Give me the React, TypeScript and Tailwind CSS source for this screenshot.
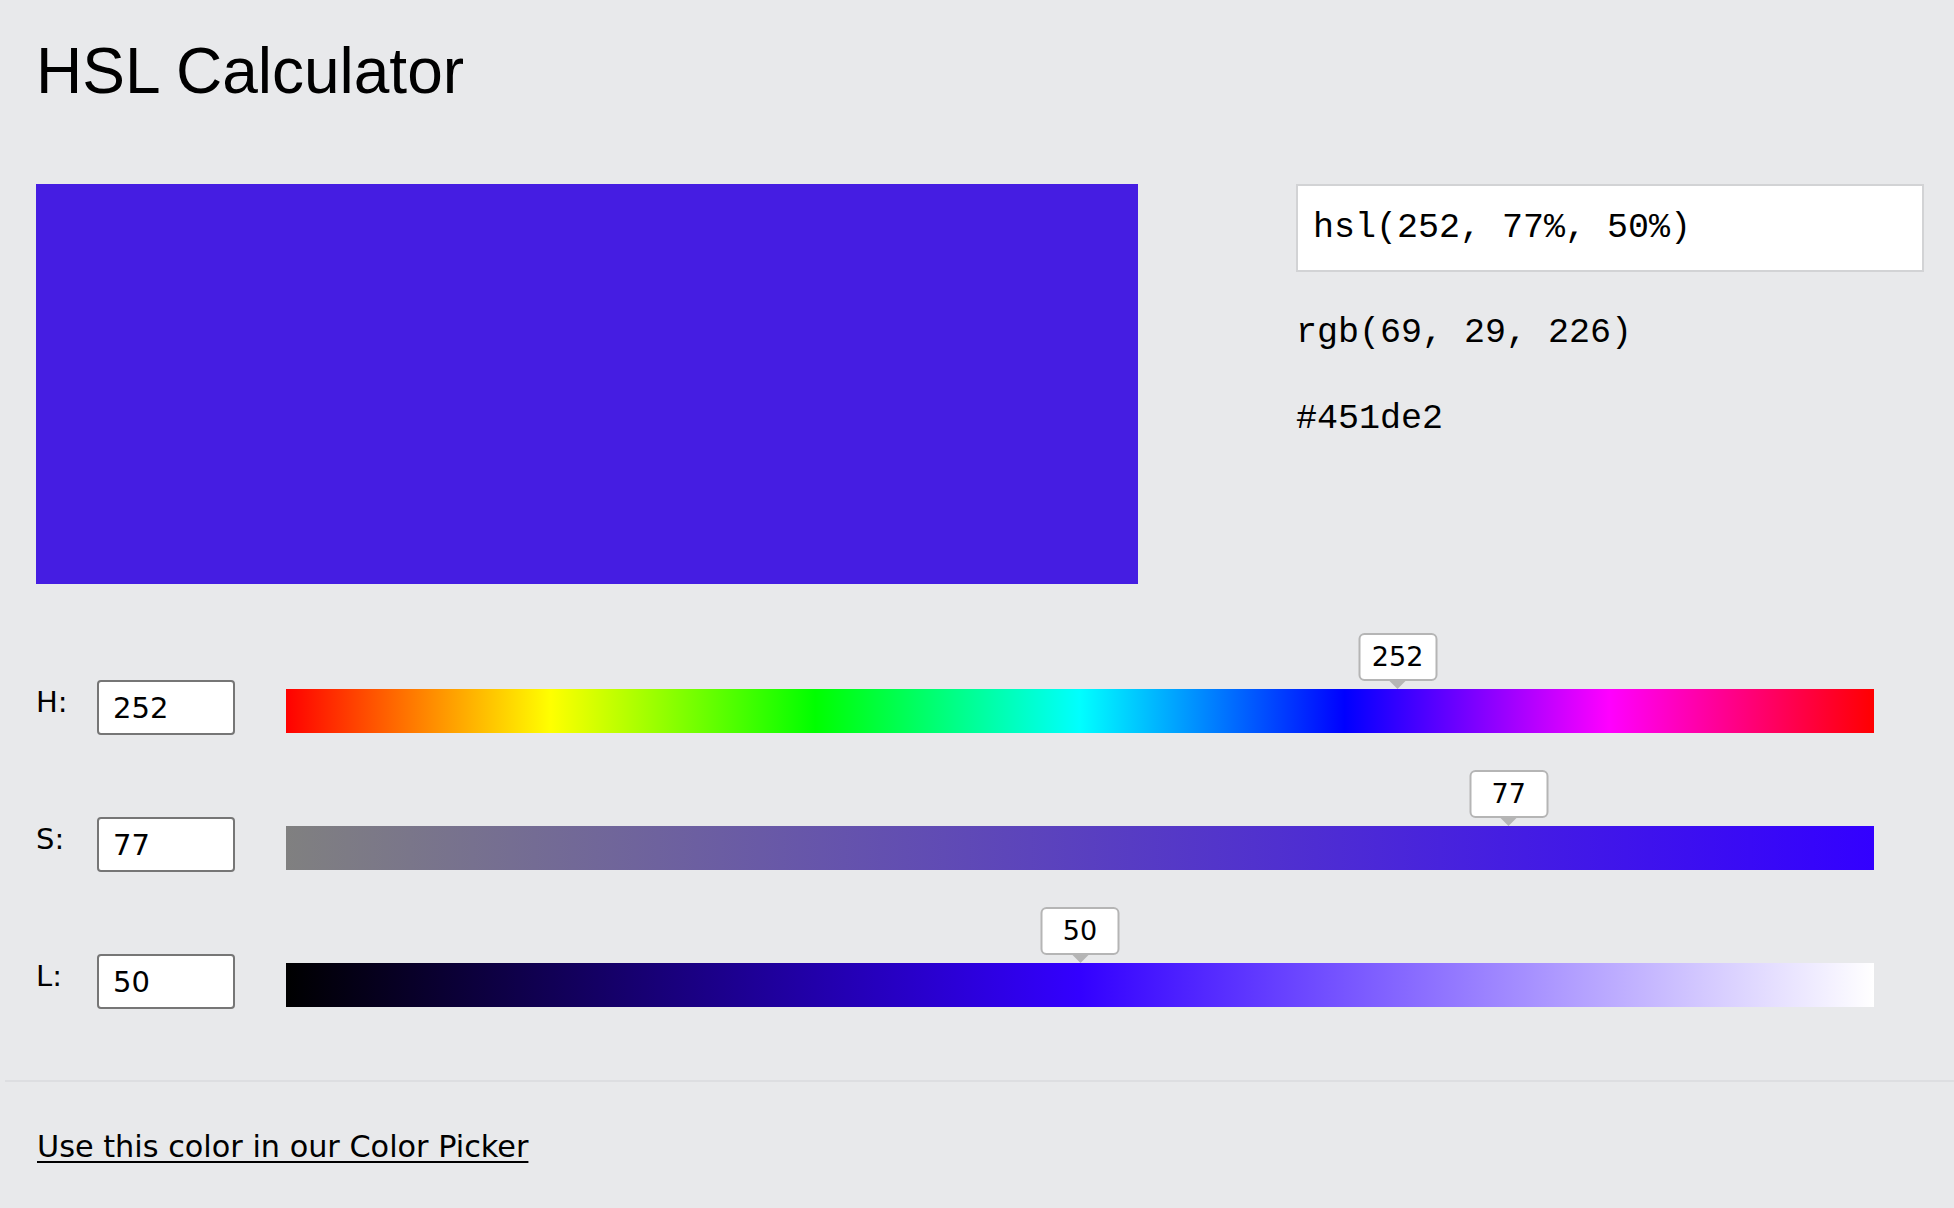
import React from 'react';

type Channel = {
  label: string;
  value: number;
  max: number;
  track: string;
};

const channels: Channel[] = [
  {
    label: 'H:',
    value: 252,
    max: 360,
    track: 'bg-[linear-gradient(to_right,#ff0000,#ffff00,#00ff00,#00ffff,#0000ff,#ff00ff,#ff0000)]',
  },
  {
    label: 'S:',
    value: 77,
    max: 100,
    track: 'bg-[linear-gradient(to_right,#808080,#3300ff)]',
  },
  {
    label: 'L:',
    value: 50,
    max: 100,
    track: 'bg-[linear-gradient(to_right,#000000,#3300ff,#ffffff)]',
  },
];

function SliderRow({ label, value, max, track }: Channel) {
  const pct = (value / max) * 100;
  return (
    <div className="flex h-[55px] items-start">
      <span className="mt-[5px] w-[61px] text-[29px] leading-[34px]">{label}</span>
      <input
        readOnly
        value={value}
        className="h-[55px] w-[138px] rounded-[4px] border-2 border-[#767676] bg-white pl-[14px] text-[29px] text-black outline-none"
      />
      <div className={`relative ml-[51px] mt-[9px] h-[44px] w-[1588px] ${track}`}>
        <div
          className="absolute bottom-full flex -translate-x-1/2 flex-col items-center"
          style={{ left: `${pct}%` }}
        >
          <div className="flex h-[48px] w-[79px] items-center justify-center rounded-[6px] border-2 border-[#b5b5b5] bg-white text-[27px]">
            {value}
          </div>
          <div className="h-0 w-0 border-x-[8px] border-t-[8px] border-x-transparent border-t-[#b5b5b5]" />
        </div>
      </div>
    </div>
  );
}

export default function App() {
  return (
    <div className="min-h-screen w-full bg-[#e8e9eb] pb-[40px] font-['DejaVu_Sans',Verdana,sans-serif] text-black">
      <div className="pl-[36px] pr-[30px] pt-[39px]">
        <h1 className="font-['Liberation_Sans',Arial,sans-serif] text-[64px] leading-none">
          HSL Calculator
        </h1>

        <div className="mt-[81px] flex justify-between">
          <div className="h-[400px] w-[1102px] bg-[#451de2]" />
          <div className="w-[628px] font-['Liberation_Mono','Courier_New',monospace] text-[35px] leading-[40px]">
            <div className="flex h-[88px] items-center border-2 border-[#d2d3d5] bg-white pl-[15px]">
              hsl(252, 77%, 50%)
            </div>
            <div className="mt-[41px]">rgb(69, 29, 226)</div>
            <div className="mt-[46px]">#451de2</div>
          </div>
        </div>

        <div className="mt-[96px] flex flex-col gap-[82px]">
          {channels.map((c) => (
            <SliderRow key={c.label} {...c} />
          ))}
        </div>
      </div>

      <hr className="ml-[5px] mt-[71px] border-0 border-t-2 border-[#dddee1]" />

      <div className="pl-[37px] pt-[47px]">
        <a href="#" className="text-[30.3px] leading-[35px] text-black underline decoration-2 underline-offset-[4px]">
          Use this color in our Color Picker
        </a>
      </div>
    </div>
  );
}
